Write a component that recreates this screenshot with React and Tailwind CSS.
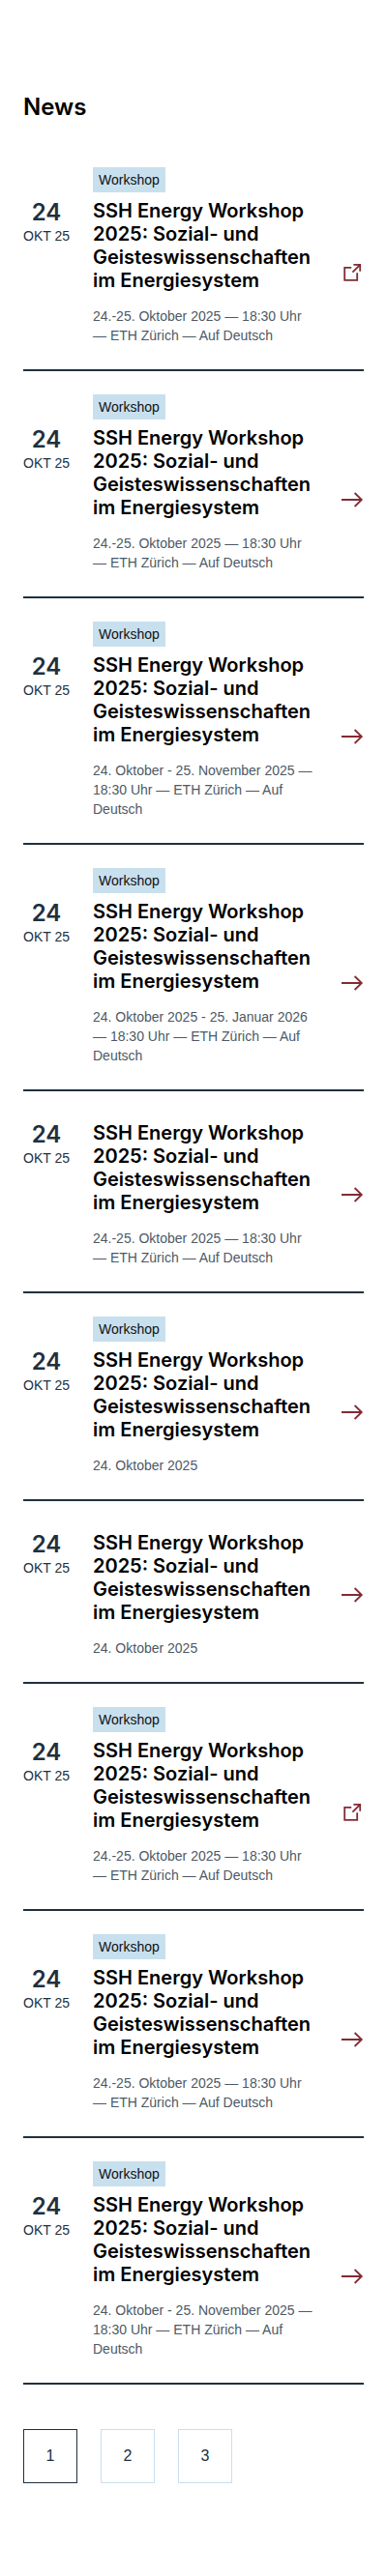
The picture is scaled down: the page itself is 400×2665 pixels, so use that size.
const TITLE = "SSH Energy Workshop 2025: Sozial- und Geisteswissenschaften im Energiesystem";
const SINGLE = "24.-25. Oktober 2025 — 18:30 Uhr — ETH Zürich — Auf Deutsch";
const NOVEMBER = "24. Oktober - 25. November 2025 — 18:30 Uhr — ETH Zürich — Auf Deutsch";
const JANUARY = "24. Oktober 2025 - 25. Januar 2026 — 18:30 Uhr — ETH Zürich — Auf Deutsch";
const DAY = "24. Oktober 2025";

const events = [
  { tag: "Workshop", meta: SINGLE, external: true },
  { tag: "Workshop", meta: SINGLE },
  { tag: "Workshop", meta: NOVEMBER },
  { tag: "Workshop", meta: JANUARY },
  { meta: SINGLE },
  { tag: "Workshop", meta: DAY },
  { meta: DAY },
  { tag: "Workshop", meta: SINGLE, external: true },
  { tag: "Workshop", meta: SINGLE },
  { tag: "Workshop", meta: NOVEMBER },
];

function ArrowIcon() {
  return (
    <svg viewBox="0 0 24 24" className="size-6" fill="none" stroke="currentColor" strokeWidth="1.8" aria-hidden="true">
      <path d="M1 12H22M14.6 5L21.8 12L14.6 19" />
    </svg>
  );
}

function ExternalIcon() {
  return (
    <svg viewBox="0 0 24 24" className="size-6" fill="none" stroke="currentColor" strokeWidth="1.8" aria-hidden="true">
      <path d="M11.2 6.9H4.2V19.8H17.2V12.2" />
      <path d="M13.4 3.9H20.2V10.7M20 4.1L12.4 11.7" />
    </svg>
  );
}

function EventRow({ event }) {
  return (
    <li className="border-b-2 border-[#20303f]">
      <a href="#" className="block pt-6 pb-[25px]">
        {event.tag && (
          <span className="ml-[72px] block w-fit bg-[#c8e0ee] px-1.5 py-[3px] text-sm leading-5 text-[#111111]">
            {event.tag}
          </span>
        )}
        <div className="mt-[7px] grid grid-cols-[48px_minmax(0,1fr)_24px] gap-x-6">
          <div className="text-center whitespace-nowrap text-[#20303f]">
            <div className="font-[Inter,sans-serif] text-2xl leading-7 font-semibold">24</div>
            <div className="text-sm leading-5">OKT 25</div>
          </div>
          <div>
            <h3 className="font-[Inter,sans-serif] text-xl leading-6 font-semibold text-black">{TITLE}</h3>
            <p className="mt-[15px] text-sm leading-5 text-[#4d5965]">{event.meta}</p>
          </div>
          <span className="self-center text-[#822b33]">{event.external ? <ExternalIcon /> : <ArrowIcon />}</span>
        </div>
      </a>
    </li>
  );
}

export default function App() {
  return (
    <main className="bg-white px-6 pt-24 pb-24 font-['Liberation_Sans',Arial,sans-serif]">
      <h2 className="font-[Inter,sans-serif] text-2xl leading-[30px] font-semibold text-black">News</h2>
      <ul className="mt-[23px]">
        {events.map((event, i) => (
          <EventRow key={i} event={event} />
        ))}
      </ul>
      <nav aria-label="Seiten" className="mt-[46px] flex gap-6">
        {[1, 2, 3].map((n) => (
          <button
            key={n}
            type="button"
            aria-current={n === 1 ? "page" : undefined}
            className="size-14 border border-[#c8e0ee] text-base leading-6 text-[#20303f] aria-[current=page]:border-[#20303f]"
          >
            {n}
          </button>
        ))}
      </nav>
    </main>
  );
}
